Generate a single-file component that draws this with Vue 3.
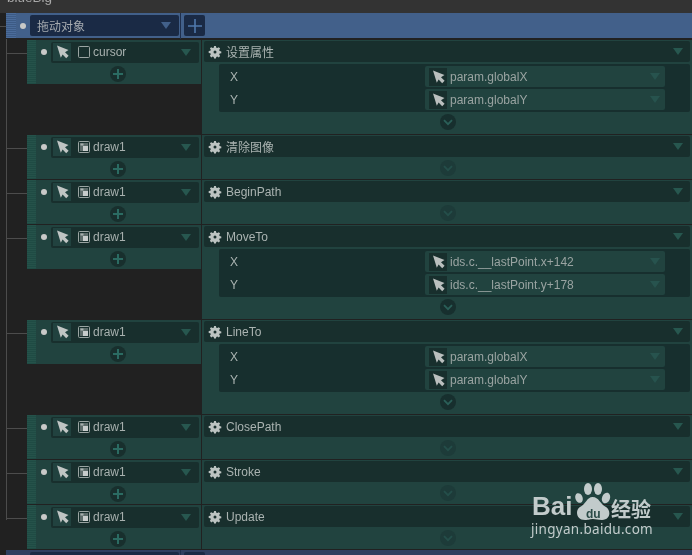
<script setup>
const rows = [
  { target: 'cursor', kind: 'box', name: '设置属性', params: [['X', 'param.globalX'], ['Y', 'param.globalY']] },
  { target: 'draw1', kind: 'pic', name: '清除图像', params: [] },
  { target: 'draw1', kind: 'pic', name: 'BeginPath', params: [] },
  { target: 'draw1', kind: 'pic', name: 'MoveTo', params: [['X', 'ids.c.__lastPoint.x+142'], ['Y', 'ids.c.__lastPoint.y+178']] },
  { target: 'draw1', kind: 'pic', name: 'LineTo', params: [['X', 'param.globalX'], ['Y', 'param.globalY']] },
  { target: 'draw1', kind: 'pic', name: 'ClosePath', params: [] },
  { target: 'draw1', kind: 'pic', name: 'Stroke', params: [] },
  { target: 'draw1', kind: 'pic', name: 'Update', params: [] }
]
const arrow = 'M1 .5 L12.5 5 L9 7.2 L12.6 10.8 L10.2 13.2 L6.600 9.600 L4.800 12.800 Z'
const gear = 'M5.1 0h1.8l.4 1.7 1 .4L9.8 1.2l1.3 1.3-.9 1.5.4 1 1.7.4v1.8l-1.7.4-.4 1 .9 1.5-1.3 1.3-1.5-.9-1 .4-.4 1.7H5.1l-.4-1.7-1-.4-1.5.9L.9 9.8l.9-1.5-.4-1L-.3 6.9V5.1l1.7-.4.4-1-.9-1.5L2.2 1.2l1.5.9 1-.4z'
</script>

<template>
  <div class="page">
    <div class="topbar"><span>blueBig</span></div>
    <div class="header">
      <div class="grip grip-blue"></div>
      <i class="dot"></i>
      <div class="select"><span>拖动对象</span><b class="tri tri-blue"></b></div>
      <div class="addbtn">
        <svg width="14" height="14" viewBox="0 0 14 14"><path d="M7 0v14M0 7h14" stroke="#4f78ac" stroke-width="1.6" /></svg>
      </div>
    </div>

    <div class="rows">
      <div v-for="(r, i) in rows" :key="i" class="row" :class="{ tall: r.params.length, last: i === rows.length - 1 }">
        <div class="gutter"></div>
        <div class="left">
          <div class="grip"></div>
          <div class="left-main">
            <div class="bar target">
              <i class="dot outer"></i>
              <div class="inner">
                <div class="pick">
                  <svg width="13" height="14" viewBox="0 0 13 14"><path :d="arrow" fill="#c0c5c4" /></svg>
                </div>
                <svg class="obj" width="12" height="12" viewBox="0 0 12 12">
                  <rect x=".5" y=".5" width="11" height="11" rx="1" fill="none" stroke="#9aa4a2" />
                  <template v-if="r.kind === 'pic'">
                    <rect x="2" y="2" width="8" height="8" fill="#5d6c6a" />
                    <rect x="2.500" y="2.500" width="3" height="2" fill="#a9b1af" />
                    <rect x="5" y="5" width="5" height="5" fill="#c8cdcc" />
                  </template>
                </svg>
                <span class="tname">{{ r.target }}</span>
                <b class="tri"></b>
              </div>
            </div>
            <div class="plus">
              <svg width="10" height="10" viewBox="0 0 10 10"><path d="M5 0v10M0 5h10" stroke="#2b6b62" stroke-width="2" /></svg>
            </div>
          </div>
        </div>
        <div class="right">
          <div class="bar action">
            <svg class="gear" width="12" height="12" viewBox="0 0 12 12">
              <path :d="gear" fill="#bcc3c1" />
              <circle cx="6" cy="6" r="1.500" fill="#182f2d" />
            </svg>
            <span class="aname">{{ r.name }}</span>
            <b class="tri"></b>
          </div>
          <div v-if="r.params.length" class="params">
            <div v-for="p in r.params" :key="p[0]" class="param">
              <span class="plabel">{{ p[0] }}</span>
              <div class="field">
                <div class="pick">
                  <svg width="13" height="14" viewBox="0 0 13 14"><path :d="arrow" fill="#babfbe" /></svg>
                </div>
                <span class="fval">{{ p[1] }}</span>
                <b class="tri dim"></b>
              </div>
            </div>
          </div>
          <div class="chev" :class="{ on: r.params.length }">
            <svg width="10" height="7" viewBox="0 0 10 7"><path d="M1 1.2l4 4 4-4" fill="none" stroke="#2a5f58" stroke-width="1.8" /></svg>
          </div>
        </div>
      </div>
    </div>

    <div class="footer">
      <div class="select"></div>
      <div class="addbtn"></div>
    </div>

    <div class="mark">
      <span class="bai">Bai</span>
      <svg class="paw" width="40" height="42" viewBox="0 0 40 42">
        <ellipse cx="5" cy="16" rx="3.6" ry="5" transform="rotate(-20 5 16)" fill="#c2cbcb" />
        <ellipse cx="14" cy="7" rx="4" ry="6" fill="#c2cbcb" />
        <ellipse cx="24" cy="7" rx="4" ry="6" fill="#c2cbcb" />
        <ellipse cx="32" cy="16" rx="4" ry="5.5" transform="rotate(20 32 16)" fill="#c2cbcb" />
        <path d="M18.500 15C13 15 12 22 6 25C1 28 2 38 11 38C15 38 16 37 19 37C22 37 24 38 28 38C37 38 37 28 32 25C26 22 25 15 18.500 15Z" fill="#c2cbcb" />
      </svg>
      <span class="du">du</span>
      <span class="jy">经验</span>
      <span class="url">jingyan.baidu.com</span>
    </div>
  </div>
</template>

<style>
html, body { margin: 0; background: #212121; overflow: hidden; }
</style>

<style scoped>
.page {
  position: relative;
  width: 692px;
  height: 555px;
  overflow: hidden;
  background: #212121;
  font-family: "Liberation Sans", "Noto Sans CJK SC", sans-serif;
  font-size: 12px;
  color: #aab3b1;
  filter: blur(.3px);
}
.topbar {
  height: 13px;
  background: #333333;
  overflow: hidden;
  padding-left: 7px;
  color: #a8a8a8;
  font-size: 13.500px;
  line-height: 14px;
}
.topbar span { display: block; margin-top: -9px; }
.header {
  position: relative;
  display: flex;
  align-items: center;
  height: 25px;
  margin-left: 6px;
  margin-bottom: 2px;
  background: #42608a;
  box-sizing: border-box;
}
.header::before {
  content: "";
  position: absolute;
  left: -6px;
  top: 13px;
  width: 6px;
  height: 1px;
  background: #4c4c4c;
}
.grip {
  width: 9px;
  flex: none;
  align-self: stretch;
  background: repeating-linear-gradient(to bottom, #25524a 0 1px, #1f4b44 1px 2px);
}
.grip-blue {
  width: 10px;
  background: repeating-linear-gradient(to bottom, #4b6c9a 0 1px, #3d5b85 1px 2px);
}
.dot {
  display: block;
  flex: none;
  width: 6px;
  height: 6px;
  border-radius: 50%;
  background: #c8c9c8;
}
.header .dot { margin: 0 4px 0 4px; }
.select {
  display: flex;
  align-items: center;
  width: 149px;
  height: 21px;
  box-sizing: border-box;
  padding: 0 7px;
  background: #1a2a45;
  border-radius: 2px;
  color: #a6abb0;
}
.select span { flex: 1; }
.addbtn {
  display: flex;
  align-items: center;
  justify-content: center;
  width: 21px;
  height: 21px;
  margin-left: 5px;
  background: #1a2a45;
  border-radius: 2px;
  position: relative;
}
.addbtn::before {
  content: "";
  position: absolute;
  left: -4px;
  top: -2px;
  bottom: -3px;
  width: 1px;
  background: #1f2f4d;
}
.tri {
  display: block;
  flex: none;
  width: 0;
  height: 0;
  border-left: 5px solid transparent;
  border-right: 5px solid transparent;
  border-top: 7px solid #27574f;
}
.tri-blue { border-top-color: #42608a; margin-right: 1px; }
.tri.dim { border-top-color: #27534e; }

.rows { display: flex; flex-direction: column; gap: 1px; }
.row { display: flex; height: 44px; background: #212121; }
.row.tall { height: 94px; }
.gutter {
  position: relative;
  width: 27px;
  flex: none;
  margin-bottom: -1px;
  background: #212121;
}
.gutter::before {
  content: "";
  position: absolute;
  left: 6px;
  top: -1px;
  bottom: 0;
  width: 1px;
  background: #4c4c4c;
}
.gutter::after {
  content: "";
  position: absolute;
  left: 6px;
  top: 13px;
  width: 21px;
  height: 1px;
  background: #4c4c4c;
}
.row.last .gutter::before { bottom: 30px; }
.left {
  display: flex;
  width: 174px;
  height: 44px;
  flex: none;
  background: #21433f;
}
.left-main { flex: 1; min-width: 0; }
.bar { display: flex; align-items: center; }
.target { height: 23px; padding-top: 1px; box-sizing: border-box; }
.outer { margin: 0 4px 0 5px; }
.inner {
  display: flex;
  align-items: center;
  width: 148px;
  height: 21px;
  box-sizing: border-box;
  padding: 0 8px 0 2px;
  border-radius: 2px;
  background: #182f2d;
}
.pick {
  display: flex;
  align-items: center;
  justify-content: center;
  flex: none;
  width: 18px;
  height: 18px;
  background: #21423f;
}
.obj { flex: none; margin-left: 7px; }
.tname { flex: 1; margin-left: 3px; color: #a8b1af; }
.plus {
  display: flex;
  align-items: center;
  justify-content: center;
  width: 16px;
  height: 16px;
  margin: 3px 0 0 74px;
  border-radius: 50%;
  background: #182f2d;
}
.right {
  display: flex;
  flex-direction: column;
  flex: 1;
  min-width: 0;
  margin-left: 1px;
  padding: 1px 2px 0;
  background: #21433f;
  box-sizing: border-box;
}
.action {
  flex: none;
  height: 21px;
  padding: 0 7px 0 5px;
  border-radius: 2px;
  background: #182f2d;
}
.gear { flex: none; overflow: visible; }
.aname { flex: 1; margin-left: 5px; }
.params {
  margin: 2px 0 0 15px;
  height: 48px;
  box-sizing: border-box;
  padding: 2px 0;
  display: flex;
  flex-direction: column;
  gap: 2px;
  border-radius: 2px;
  background: #172f2e;
}
.param { display: flex; align-items: center; height: 21px; }
.plabel { width: 206px; flex: none; padding-left: 11px; box-sizing: border-box; }
.field {
  display: flex;
  align-items: center;
  width: 240px;
  height: 21px;
  box-sizing: border-box;
  padding: 0 5px 0 4px;
  border-radius: 2px;
  background: #21433f;
}
.field .pick { background: #182f2d; }
.fval { flex: 1; margin-left: 3px; color: #9aa4a2; }
.chev {
  display: flex;
  align-items: center;
  justify-content: center;
  width: 16px;
  height: 16px;
  margin: 3px 0 0 235.500px;
  border-radius: 50%;
  background: #1d3b39;
}
.chev.on { background: #172f2e; margin-top: 2px; }
.chev svg { opacity: .55; }
.chev.on svg { opacity: 1; }

.footer {
  display: flex;
  height: 5px;
  margin: 1px 0 0 6px;
  padding: 2px 0 0 24px;
  background: #2f3f60;
  box-sizing: border-box;
  overflow: hidden;
}
.footer .select { flex: none; }
.footer .addbtn { flex: none; }

.mark {
  position: absolute;
  left: 530px;
  top: 478px;
  width: 130px;
  height: 65px;
  color: #c2cbcb;
}
.bai {
  position: absolute;
  left: 2px;
  top: 14px;
  font: bold 26px/28px "Liberation Sans", sans-serif;
}
.paw { position: absolute; left: 44px; top: 4px; }
.du {
  position: absolute;
  left: 56px;
  top: 29px;
  font: bold 12px/14px "Liberation Sans", sans-serif;
  color: #2a4a47;
}
.jy {
  position: absolute;
  left: 81px;
  top: 20px;
  font: bold 20px/22px "Noto Sans CJK SC", sans-serif;
}
.url {
  position: absolute;
  left: 1px;
  top: 43px;
  font: 13.500px/16px "Noto Sans", sans-serif;
  letter-spacing: .3px;
  white-space: nowrap;
}
</style>
